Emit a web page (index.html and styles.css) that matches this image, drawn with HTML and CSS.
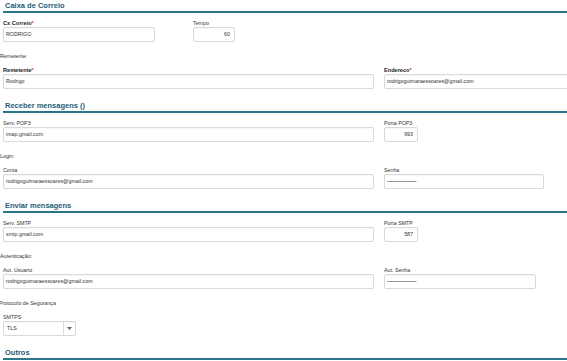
FILE: index.html
```html
<!DOCTYPE html>
<html lang="pt">
<head>
<meta charset="utf-8">
<title>Caixa de Correio</title>
<link rel="stylesheet" href="styles.css">
</head>
<body>
<div class="page">
  <div class="title first">Caixa de Correio</div>
  <div class="row">
    <div class="field w-cx">
      <div class="label bold">Cx Correio<span class="req">*</span></div>
      <div class="ctrl">RODRIGO</div>
    </div>
    <div class="field w-tempo gap-tempo">
      <div class="label">Tempo</div>
      <div class="ctrl num">60</div>
    </div>
  </div>
  <div class="group">Remetente:</div>
  <div class="row">
    <div class="field w-left">
      <div class="label bold">Remetente<span class="req">*</span></div>
      <div class="ctrl">Rodrigo</div>
    </div>
    <div class="field w-wide">
      <div class="label bold">Endereco<span class="req">*</span></div>
      <div class="ctrl">rodrigoguimaraessoares@gmail.com</div>
    </div>
  </div>

  <div class="title">Receber mensagens ()</div>
  <div class="row">
    <div class="field w-left">
      <div class="label">Serv. POP3</div>
      <div class="ctrl">imap.gmail.com</div>
    </div>
    <div class="field w-port">
      <div class="label">Porta POP3</div>
      <div class="ctrl num">993</div>
    </div>
  </div>
  <div class="group">Login:</div>
  <div class="row">
    <div class="field w-left">
      <div class="label">Conta</div>
      <div class="ctrl">rodrigoguimaraessoares@gmail.com</div>
    </div>
    <div class="field w-senha">
      <div class="label">Senha</div>
      <div class="ctrl pw">••••••••••••••••••••••</div>
    </div>
  </div>

  <div class="title">Enviar mensagens</div>
  <div class="row">
    <div class="field w-left">
      <div class="label">Serv. SMTP</div>
      <div class="ctrl">smtp.gmail.com</div>
    </div>
    <div class="field w-port">
      <div class="label">Porta SMTP</div>
      <div class="ctrl num">587</div>
    </div>
  </div>
  <div class="group">Autenticação:</div>
  <div class="row">
    <div class="field w-left">
      <div class="label">Aut. Usuario</div>
      <div class="ctrl">rodrigoguimaraessoares@gmail.com</div>
    </div>
    <div class="field w-autsenha">
      <div class="label">Aut. Senha</div>
      <div class="ctrl pw">••••••••••••••••••••••</div>
    </div>
  </div>
  <div class="group shift">Protocolo de Segurança</div>
  <div class="row">
    <div class="field w-select">
      <div class="label">SMTPS</div>
      <div class="ctrl select">
        <span class="sel-val">TLS</span>
        <span class="sel-btn"><svg width="5" height="3" viewBox="0 0 5 3"><path d="M0 0H5L2.5 3Z" fill="#666"/></svg></span>
      </div>
    </div>
  </div>

  <div class="title">Outros</div>
</div>
</body>
</html>
```

FILE: styles.css
```css
html, body {
  margin: 0;
  padding: 0;
  background: #ffffff;
}
body {
  width: 567px;
  height: 361px;
  overflow: hidden;
  font-family: "Liberation Sans", Arial, sans-serif;
  color: #333333;
}
.page {
  display: flex;
  flex-direction: column;
}
.title {
  flex: none;
  margin: 10px 0 6px 3px;
  padding: 2px 0 0 2px;
  height: 10px;
  line-height: 10px;
  font-size: 7.5px;
  font-weight: bold;
  color: #1d5c77;
  border-bottom: 2px solid #2a7589;
  white-space: nowrap;
}
.title.first {
  margin-top: 0;
  padding-top: 1px;
}
.row {
  display: flex;
  padding-left: 3px;
  gap: 10px;
}
.field {
  display: flex;
  flex-direction: column;
  flex: none;
}
.label {
  height: 8px;
  line-height: 8px;
  font-size: 5.3px;
  color: #333333;
  white-space: nowrap;
}
.label.bold {
  font-weight: bold;
  font-size: 5.6px;
  color: #222222;
}
.req {
  color: #e0302a;
}
.group {
  flex: none;
  margin: 10px 0 5px 0;
  height: 9px;
  line-height: 9px;
  font-size: 5.3px;
  color: #333333;
  white-space: nowrap;
}
.group.shift {
  margin-left: -1px;
}
.ctrl {
  box-sizing: border-box;
  height: 15px;
  line-height: 13px;
  border: 1px solid #d9d9d9;
  border-radius: 2px;
  background: #ffffff;
  padding: 0 2px;
  font-size: 5.3px;
  color: #333333;
  white-space: nowrap;
  overflow: hidden;
  box-shadow: inset 0 1px 1px rgba(0, 0, 0, 0.03);
}
.ctrl.num {
  text-align: right;
  padding-right: 4px;
}
.ctrl.pw {
  font-size: 4.4px;
  letter-spacing: -0.2px;
  color: #444444;
}
.w-cx { width: 152px; }
.w-tempo { width: 42px; }
.gap-tempo { margin-left: 28px; }
.w-left { width: 371px; }
.w-wide { width: 200px; }
.w-port { width: 34px; }
.w-senha { width: 160px; }
.w-autsenha { width: 152px; }
.w-select { width: 73px; }
.ctrl.select {
  display: flex;
  padding: 0;
}
.sel-val {
  flex: 1;
  padding-left: 3px;
}
.sel-btn {
  width: 11px;
  border-left: 1px solid #d9d9d9;
  display: flex;
  align-items: center;
  justify-content: center;
}
```
